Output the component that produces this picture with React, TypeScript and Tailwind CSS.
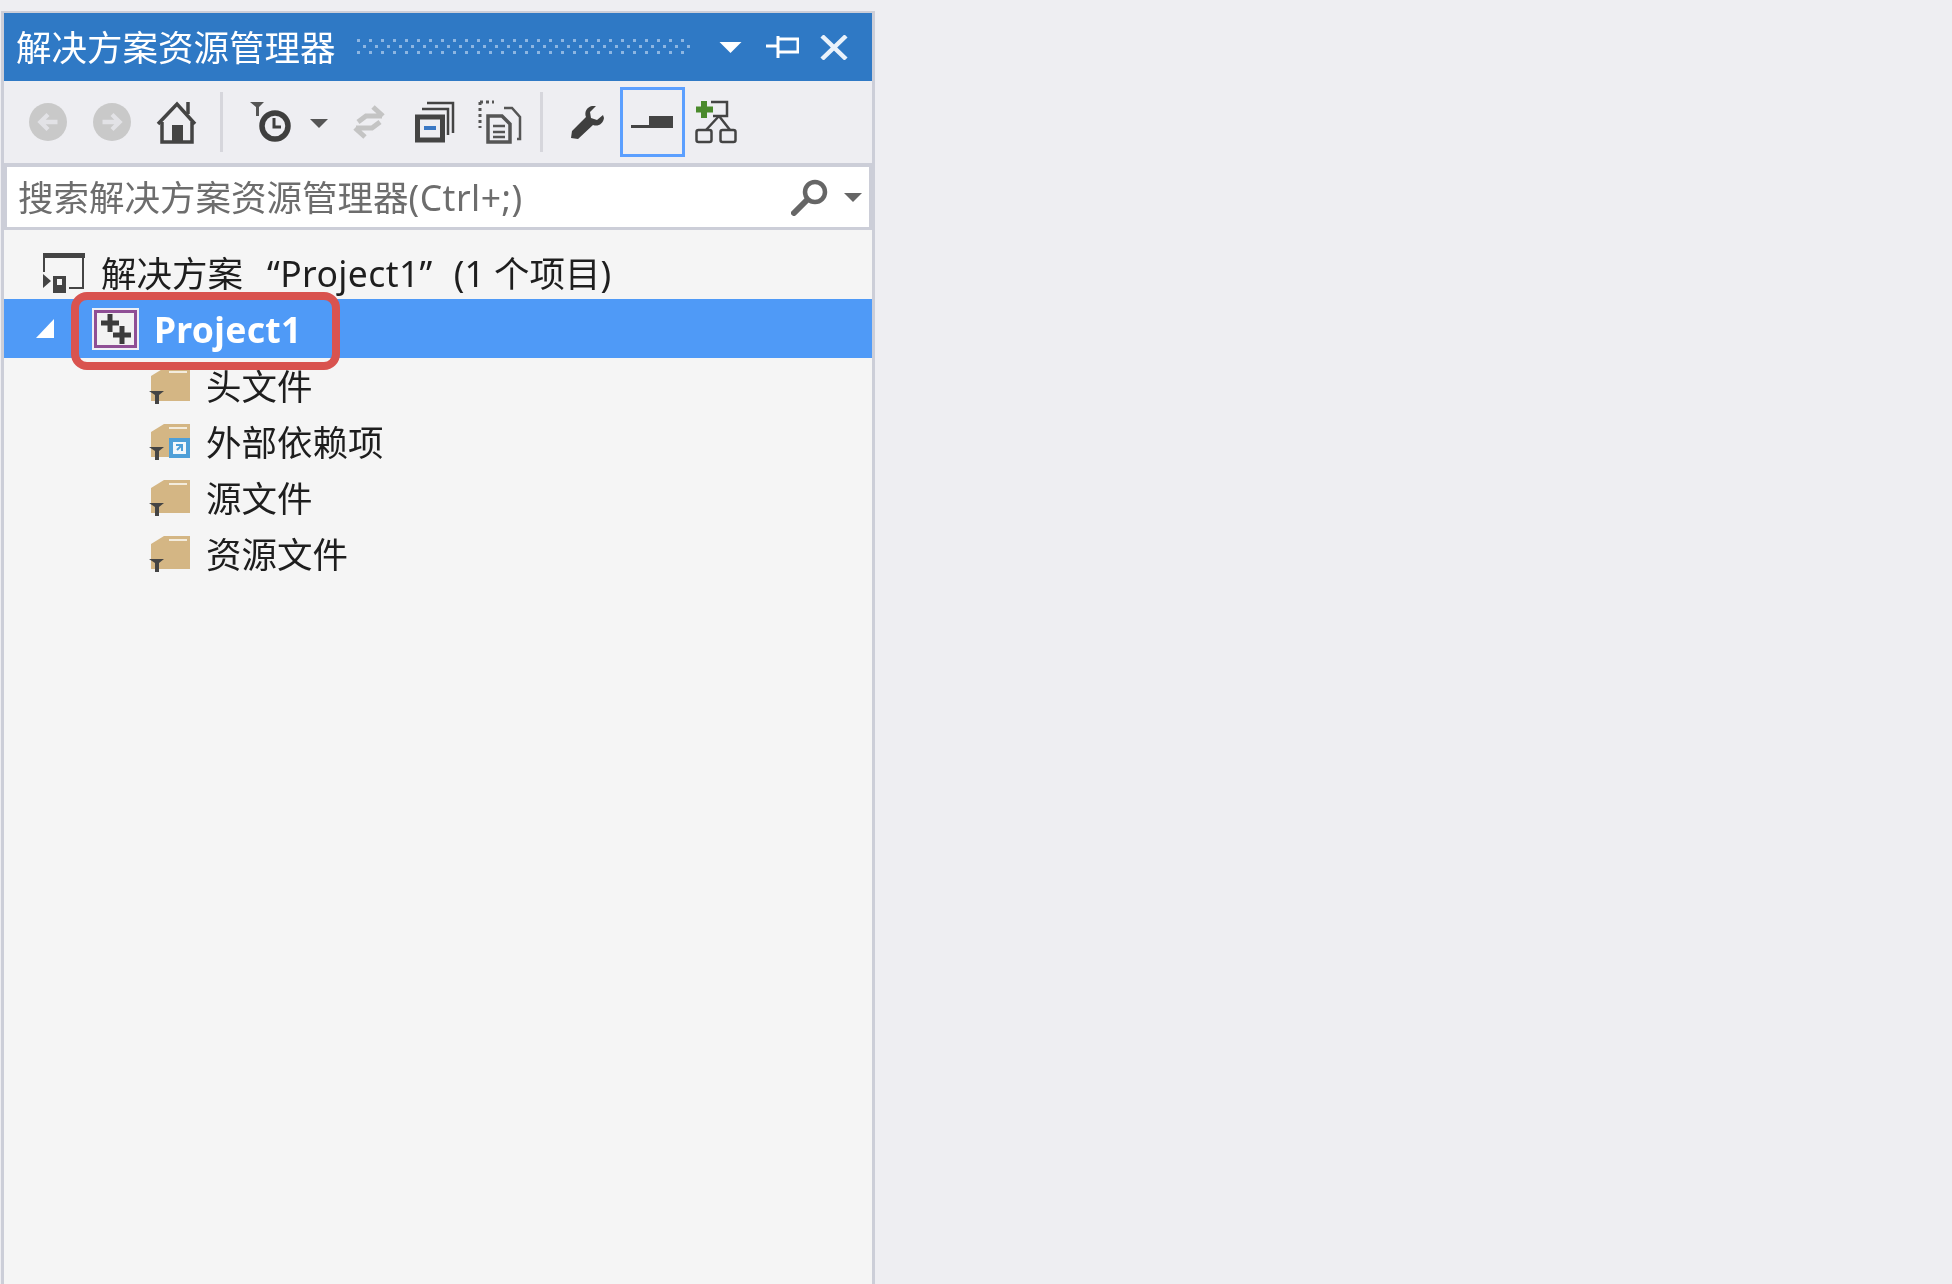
const font = { fontFamily: '"Noto Sans", "Noto Sans CJK SC", sans-serif' }

function Caret({ fill = '#555', w = 18, h = 9 }: { fill?: string; w?: number; h?: number }) {
  return (
    <svg width={w} height={h} viewBox="0 0 18 9">
      <path d="M0 0h18L9 9z" fill={fill} />
    </svg>
  )
}

function Circle({ dir }: { dir: 'left' | 'right' }) {
  const d = dir === 'left' ? 'M30 20H13M20 12l-8 8 8 8' : 'M10 20h17M20 12l8 8-8 8'
  return (
    <svg width="38" height="38" viewBox="0 0 40 40">
      <circle cx="20" cy="20" r="20" fill="#c9c9c9" />
      <path d={d} stroke="#e2e2e6" strokeWidth="4.500" fill="none" />
    </svg>
  )
}

function Home() {
  return (
    <svg width="42" height="44" viewBox="0 0 42 44">
      <path d="M2 24 21 4l18 20" fill="none" stroke="#444" strokeWidth="3.500" />
      <path d="M32 2v12" stroke="#444" strokeWidth="3.500" />
      <path d="M6 22v20h30V22" fill="none" stroke="#444" strokeWidth="3.500" />
      <rect x="16" y="25" width="11" height="17" fill="#444" />
    </svg>
  )
}

function Timer() {
  return (
    <svg width="42" height="42" viewBox="0 0 42 42">
      <path d="M1 1h14l-5 5v9H7V6z" fill="#555" />
      <circle cx="26" cy="25" r="13" fill="#eeeef2" stroke="#3f3f3f" strokeWidth="5.500" />
      <path d="M25 17v9h7" fill="none" stroke="#3f3f3f" strokeWidth="3" />
    </svg>
  )
}

function Sync() {
  return (
    <svg width="34" height="34" viewBox="0 0 34 34" fill="none" stroke="#c4c4c4" strokeWidth="5">
      <path d="M6 17 14 11h16M21 2l10 9" />
      <path d="M28 17l-8 6H4M13 32 3 23" />
    </svg>
  )
}

function Collapse() {
  return (
    <svg width="40" height="42" viewBox="0 0 40 42" fill="none" stroke="#444">
      <path d="M12 2h26v30" strokeWidth="2.500" />
      <path d="M7 8h26v26" strokeWidth="2.500" />
      <rect x="2.500" y="16" width="25" height="23" strokeWidth="5" />
      <rect x="9" y="25" width="12" height="4" fill="#3b78c4" stroke="none" />
    </svg>
  )
}

function ShowAll() {
  return (
    <svg width="44" height="44" viewBox="0 0 44 44" fill="none" stroke="#555">
      <path d="M2 2h14M2 2v26" strokeWidth="3" strokeDasharray="3 3" />
      <path d="M26 8h8l8 9v22h-3" strokeWidth="2.500" />
      <path d="M10 16h14l8 8v18H10z" strokeWidth="3.500" />
      <path d="M15 26h12M15 32h12M15 37h12" strokeWidth="2.500" />
    </svg>
  )
}

function Wrench() {
  return (
    <svg width="34" height="34" viewBox="0 0 34 34">
      <path d="M21 1c-5 1-8 6-6 11L1 26l-1 7 7 1 15-14c5 2 10-1 11-7l-1-3-6 5-6-2-1-6 6-6z" fill="#3f3f3f" />
    </svg>
  )
}

function PinToggle() {
  return (
    <svg width="44" height="14" viewBox="0 0 44 14">
      <rect x="0" y="10" width="20" height="3" fill="#444" />
      <rect x="18" y="1" width="24" height="12" fill="#444" />
    </svg>
  )
}

function Diagram() {
  return (
    <svg width="42" height="44" viewBox="0 0 42 44" fill="none" stroke="#444" strokeWidth="2.500">
      <path d="M16 2h16v14H18" />
      <path d="M24 16 11 30M24 16l11 14" />
      <rect x="1.500" y="30" width="15" height="12" rx="2" />
      <rect x="25.500" y="30" width="15" height="12" rx="2" />
      <path d="M9 1v17M1 9.500h17" stroke="#4a8a2c" strokeWidth="6" />
    </svg>
  )
}

function Search() {
  return (
    <svg width="38" height="38" viewBox="0 0 38 38" fill="none" stroke="#666">
      <circle cx="24" cy="14" r="10" strokeWidth="4.500" />
      <path d="M16 22 3 35" strokeWidth="6" strokeLinecap="round" />
    </svg>
  )
}

function SolutionIcon() {
  return (
    <svg width="42" height="42" viewBox="0 0 42 42" fill="none">
      <path d="M1 4h39v32H26M1 4v16" stroke="#444" strokeWidth="2" />
      <rect x="0" y="1" width="42" height="5" fill="#444" />
      <path d="M0 22l8 7-8 7zM10 24h13v17H10z" fill="#444" />
      <path d="M14 27h5v6h-5z" fill="#f5f5f5" />
    </svg>
  )
}

function ProjectIcon() {
  return (
    <svg width="47" height="42" viewBox="0 0 47 42">
      <rect x="0" y="0" width="47" height="42" fill="#eef0f6" />
      <rect x="3.500" y="3.500" width="40" height="35" fill="#f2f2f2" stroke="#8f4f95" strokeWidth="3" />
      <path d="M18 6v18M9 15h18M30 18v18M21 27h18" stroke="#3c3c3c" strokeWidth="5" />
    </svg>
  )
}

function Folder({ external }: { external?: boolean }) {
  return (
    <svg width="42" height="36" viewBox="0 0 42 36">
      <path d="M2 8 15 0h26v33H2z" fill="#d4b684" />
      <rect x="20" y="3" width="18" height="2" fill="#f3ecdd" />
      <path d="M0 23h15l-5 4v9H6v-9z" fill="#444" />
      {external && (
        <g>
          <rect x="20" y="14" width="21" height="20" fill="#4e9fd8" />
          <rect x="24" y="18" width="13" height="12" fill="#f2f7fb" />
          <path d="M27 21h6v6M33 21l-5 5" fill="none" stroke="#4e9fd8" strokeWidth="2" />
        </g>
      )}
    </svg>
  )
}

const folders = [
  { name: '头文件' },
  { name: '外部依赖项', external: true },
  { name: '源文件' },
  { name: '资源文件' },
]

export default function App() {
  return (
    <div className="h-[1284px] overflow-hidden bg-[#eeeef2] pl-px pt-[11px]" style={font}>
      <div className="flex h-[1273px] w-[874px] flex-col border-x-[3px] border-t-2 border-[#ccced8] bg-[#f5f5f5] blur-[0.6px]">
        <div className="flex h-[68px] items-center bg-[#2f79c5] pl-[12px] text-[#fff]">
          <span className="text-[35.500px] leading-[50px]">解决方案资源管理器</span>
          <svg className="ml-[21px] h-[16px] w-[336px]" viewBox="0 0 336 16">
            <defs>
              <pattern id="grip" width="12" height="12" patternUnits="userSpaceOnUse">
                <rect x="0" y="0" width="3" height="3" fill="#8db6e2" />
                <rect x="6" y="6" width="3" height="3" fill="#8db6e2" />
              </pattern>
            </defs>
            <rect width="336" height="16" fill="url(#grip)" />
          </svg>
          <span className="ml-[26px] flex items-center">
            <Caret fill="#fff" w={23} h={11} />
          </span>
          <svg className="ml-[24px]" width="33" height="22" viewBox="0 0 33 22">
            <path d="M0 10h12M12 0v22M12 3h20v13H12" fill="none" stroke="#fff" strokeWidth="3" />
          </svg>
          <svg className="ml-[21px]" width="28" height="25" viewBox="0 0 28 25">
            <path d="M2 1l24 23M26 1 2 24" stroke="#eaf2fb" strokeWidth="4.500" />
          </svg>
        </div>
        <div className="flex h-[86px] items-center border-b-4 border-[#ccced8] bg-[#eeeef2]">
          <div className="ml-[25px] flex items-center"><Circle dir="left" /></div>
          <div className="ml-[26px] flex items-center"><Circle dir="right" /></div>
          <div className="ml-[25px] flex items-center"><Home /></div>
          <div className="ml-[22px] h-[60px] w-[3px] bg-[#d6d6dc]" />
          <div className="ml-[26px] flex items-center"><Timer /></div>
          <div className="ml-[19px] mt-[2px] flex items-center"><Caret /></div>
          <div className="ml-[24px] flex items-center"><Sync /></div>
          <div className="ml-[29px] flex items-center"><Collapse /></div>
          <div className="ml-[23px] flex items-center"><ShowAll /></div>
          <div className="ml-[18px] h-[60px] w-[3px] bg-[#d6d6dc]" />
          <div className="ml-[28px] flex items-center"><Wrench /></div>
          <div className="ml-[15px] flex h-[70px] w-[65px] items-center justify-center border-[3px] border-[#5b9fff]"><PinToggle /></div>
          <div className="ml-[10px] flex items-center"><Diagram /></div>
        </div>
        <div className="flex h-[63px] items-center border-x-[3px] border-b-[3px] border-[#ccced8] bg-[#fff] pr-[7px] pl-[11px]">
          <span className="flex-1 text-[35.500px] leading-[50px] text-[#6d6d6d]">
            搜索解决方案资源管理器<span className="tracking-[0.5px]">(Ctrl+;)</span>
          </span>
          <Search />
          <div className="ml-[15px] flex items-center"><Caret fill="#666" /></div>
        </div>
        <div className="flex flex-1 flex-col pt-[17px]">
          <div className="flex h-[52px] items-center pl-[39px]">
            <SolutionIcon />
            <span className="ml-[16px] text-[35.500px] leading-[50px] whitespace-nowrap text-[#1e1e1e]">
              解决方案
              <span className="ml-[24px] tracking-[0.4px]">“Project1”</span>
              <span className="ml-[21px]">(1 个项目)</span>
            </span>
          </div>
          <div className="relative flex h-[59px] items-center bg-[#4f9af7]">
            <svg className="ml-[32px]" width="18" height="19" viewBox="0 0 18 19">
              <path d="M18 0v19H0z" fill="#fff" />
            </svg>
            <div className="ml-[38px]"><ProjectIcon /></div>
            <span className="ml-[15px] text-[35.500px] leading-[50px] font-bold tracking-[0.3px] text-[#fff]">Project1</span>
            <div className="absolute top-[-7px] left-[67px] h-[78px] w-[269px] rounded-[16px] border-[8px] border-[#d9534f]" />
          </div>
          {folders.map((f) => (
            <div key={f.name} className="flex h-[56px] items-center pl-[145px]">
              <Folder external={f.external} />
              <span className="ml-[15px] text-[35.500px] leading-[50px] text-[#1e1e1e]">{f.name}</span>
            </div>
          ))}
        </div>
      </div>
    </div>
  )
}
